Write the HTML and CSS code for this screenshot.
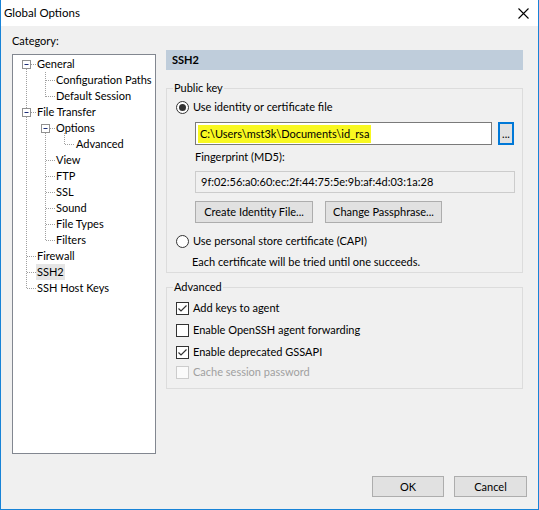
FILE: index.html
```html
<!DOCTYPE html>
<html>
<head>
<meta charset="utf-8">
<title>Global Options</title>
<link rel="stylesheet" href="styles.css">
</head>
<body>
<div class="window">
  <div class="titlebar">
    <span class="title">Global Options</span>
    <svg class="close" width="11" height="11" viewBox="0 0 11 11"><path d="M0.5 0.5 L10.5 10.5 M10.5 0.5 L0.5 10.5" stroke="#000" stroke-width="1.1" fill="none"/></svg>
  </div>
  <div class="content">
    <div class="main">
      <div class="leftcol">
        <div class="catlabel">Category:</div>
        <div class="tree">
          <svg class="tree-lines" width="142" height="398" viewBox="13 55 142 398">
            <g stroke="#a0a0a0" stroke-width="1" stroke-dasharray="1 1" fill="none">
              <path d="M26.5 69 V117 M26.5 117 V289"/>
              <path d="M31 64.5 H36 M31 112.5 H36 M27 256.5 H36 M27 272.5 H36 M27 288.5 H36"/>
              <path d="M45.5 72 V97 M46 80.5 H55 M46 96.5 H55"/>
              <path d="M45.5 133 V241 M50 128.5 H55 M46 160.5 H55 M46 176.5 H55 M46 192.5 H55 M46 208.5 H55 M46 224.5 H55 M46 240.5 H55"/>
              <path d="M64.5 133 V145 M65 144.5 H75"/>
            </g>
            <g stroke="#919191" fill="#fff">
              <rect x="22.5" y="60.5" width="8" height="8"/>
              <rect x="22.5" y="108.5" width="8" height="8"/>
              <rect x="41.5" y="124.5" width="8" height="8"/>
            </g>
            <g stroke="#1e2f78" fill="none">
              <path d="M24.5 64.5 H28.5 M24.5 112.5 H28.5 M43.5 128.5 H47.5"/>
            </g>
          </svg>
          <div class="node l1">General</div>
          <div class="node l2">Configuration Paths</div>
          <div class="node l2">Default Session</div>
          <div class="node l1">File Transfer</div>
          <div class="node l2">Options</div>
          <div class="node l3">Advanced</div>
          <div class="node l2">View</div>
          <div class="node l2">FTP</div>
          <div class="node l2">SSL</div>
          <div class="node l2">Sound</div>
          <div class="node l2">File Types</div>
          <div class="node l2">Filters</div>
          <div class="node l1">Firewall</div>
          <div class="node l1"><span class="sel">SSH2</span></div>
          <div class="node l1">SSH Host Keys</div>
        </div>
      </div>
      <div class="rightcol">
        <div class="header">SSH2</div>
        <fieldset class="group pubkey">
          <legend>Public key</legend>
          <div class="opt">
            <svg class="radio" width="13" height="13" viewBox="0 0 13 13"><circle cx="6.5" cy="6.5" r="6" fill="#fff" stroke="#333"/><circle cx="6.5" cy="6.5" r="3.5" fill="#333"/></svg>
            <span>Use identity or certificate file</span>
          </div>
          <div class="filerow">
            <div class="input"><span class="hl">C:\Users\mst3k\Documents\id_rsa</span></div>
            <div class="browse">...</div>
          </div>
          <div class="fplabel">Fingerprint (MD5):</div>
          <div class="fpbox">9f:02:56:a0:60:ec:2f:44:75:5e:9b:af:4d:03:1a:28</div>
          <div class="btnrow">
            <div class="btn create">Create Identity File...</div>
            <div class="btn change">Change Passphrase...</div>
          </div>
          <div class="opt opt2">
            <svg class="radio" width="13" height="13" viewBox="0 0 13 13"><circle cx="6.5" cy="6.5" r="6" fill="#fff" stroke="#333"/></svg>
            <span>Use personal store certificate (CAPI)</span>
          </div>
          <div class="desc">Each certificate will be tried until one succeeds.</div>
        </fieldset>
        <fieldset class="group adv">
          <legend>Advanced</legend>
          <div class="opt chk">
            <svg class="cb" width="13" height="13" viewBox="0 0 13 13"><rect x="0.5" y="0.5" width="12" height="12" fill="#fff" stroke="#333"/><path d="M2.5 6.5 L5 9 L10.5 3.5" stroke="#333" stroke-width="1.2" fill="none"/></svg>
            <span>Add keys to agent</span>
          </div>
          <div class="opt chk">
            <svg class="cb" width="13" height="13" viewBox="0 0 13 13"><rect x="0.5" y="0.5" width="12" height="12" fill="#fff" stroke="#333"/></svg>
            <span>Enable OpenSSH agent forwarding</span>
          </div>
          <div class="opt chk">
            <svg class="cb" width="13" height="13" viewBox="0 0 13 13"><rect x="0.5" y="0.5" width="12" height="12" fill="#fff" stroke="#333"/><path d="M2.5 6.5 L5 9 L10.5 3.5" stroke="#333" stroke-width="1.2" fill="none"/></svg>
            <span>Enable deprecated GSSAPI</span>
          </div>
          <div class="opt chk last disabled">
            <svg class="cb" width="13" height="13" viewBox="0 0 13 13"><rect x="0.5" y="0.5" width="12" height="12" fill="#fafafa" stroke="#cccccc"/></svg>
            <span>Cache session password</span>
          </div>
        </fieldset>
      </div>
    </div>
    <div class="footer">
      <div class="btn ok">OK</div>
      <div class="btn cancel">Cancel</div>
    </div>
  </div>
</div>
</body>
</html>
```
FILE: styles.css
```css
* { box-sizing: border-box; }
html, body { margin: 0; padding: 0; }
body {
  font-family: "Lato", "Liberation Sans", sans-serif;
  font-size: 11px;
  color: #000;
  background: #f0f0f0;
}
.window {
  width: 539px;
  height: 510px;
  border: 1px solid #1883d7;
  border-top: none;
  background: #f0f0f0;
  overflow: hidden;
}
.titlebar {
  height: 26px;
  background: #fff;
  display: flex;
  align-items: center;
  padding-left: 3px;
}
.title { line-height: 16px; font-size: 11.5px; }
.close { margin-left: auto; margin-right: 9px; margin-top: 0; }
.content { padding: 7px 15px 0 11px; }
.main { display: flex; gap: 10px; }
.leftcol { width: 144px; }
.catlabel { line-height: 16px; height: 16px; }
.tree {
  position: relative;
  margin-top: 5px;
  height: 400px;
  border: 1px solid #828790;
  background: #fff;
  padding-top: 1px;
}
.tree-lines { position: absolute; left: 0; top: 0; }
.node { position: relative; height: 16px; line-height: 16px; white-space: nowrap; }
.l1 { padding-left: 24px; }
.l2 { padding-left: 43px; }
.l3 { padding-left: 63px; }
.sel { display: inline-block; background: #e5e5e5; padding: 0 1px; margin-left: -1px; height: 16px; }
.rightcol { width: 357px; padding-top: 17px; }
.header {
  height: 20px;
  line-height: 20px;
  background: #bfcddb;
  font-weight: bold;
  padding-left: 6px;
}
.group {
  margin: 0;
  border: 1px solid #dcdcdc;
  padding: 0;
  min-width: 0;
}
.group legend {
  padding: 0 1px;
  margin-left: 6px;
  line-height: 16px;
  height: 16px;
}
.pubkey { margin-top: 10px; padding: 3px 0 2px 0; }
.adv { margin-top: 6px; padding: 5px 0 8px 0; }
.opt {
  display: flex;
  align-items: center;
  gap: 4px;
  height: 16px;
  margin-left: 9px;
  line-height: 16px;
}
.radio, .cb { flex: none; display: block; }
.filerow { display: flex; gap: 6px; margin: 7px 0 0 28px; }
.input {
  width: 297px;
  height: 23px;
  border: 1px solid #7a7a7a;
  background: #fff;
  padding-left: 4px;
  display: flex;
  align-items: center;
}
.hl { background: #f8f820; line-height: 18px; padding: 0 2px; margin-left: -2px; }
.browse {
  width: 16px;
  height: 23px;
  border: 2px solid #0078d7;
  background: #e1e1e1;
  text-align: center;
  line-height: 19px;
  font-size: 11px;
}
.fplabel { margin: 4px 0 0 28px; line-height: 16px; height: 16px; }
.fpbox {
  margin: 6px 0 0 28px;
  width: 320px;
  height: 22px;
  border: 1px solid #cccccc;
  background: #f0f0f0;
  padding-left: 5px;
  line-height: 20px;
}
.btnrow { display: flex; gap: 12px; margin: 8px 0 0 28px; }
.btn {
  height: 22px;
  border: 1px solid #adadad;
  background: #e1e1e1;
  text-align: center;
  line-height: 20px;
}
.create { width: 118px; }
.change { width: 117px; }
.opt2 { margin-top: 10px; }
.desc { margin: 5px 0 0 25px; line-height: 16px; height: 16px; }
.chk + .chk { margin-top: 6px; }
.chk.last { margin-top: 4px; }
.disabled { color: #a0a0a0; }
.footer {
  display: flex;
  justify-content: flex-end;
  gap: 10px;
  margin-top: 22px;
  margin-right: -4px;
}
.footer .btn { height: 21px; line-height: 19px; }
.ok { width: 72px; }
.cancel { width: 73px; }
```
